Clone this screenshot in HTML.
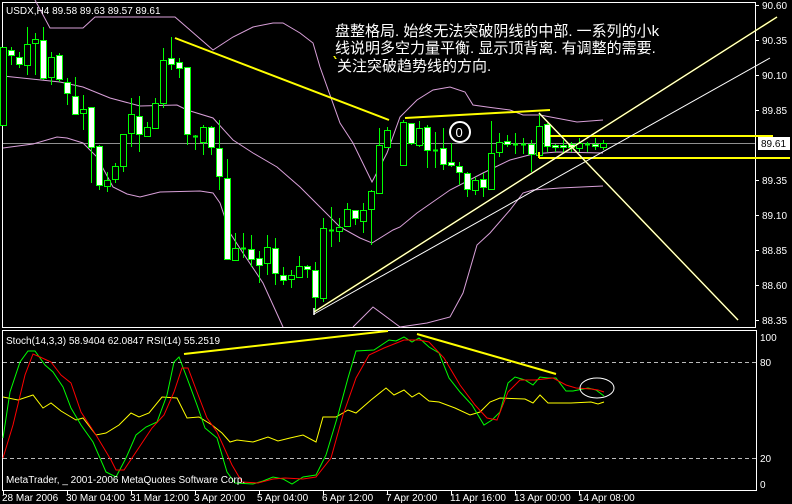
<!DOCTYPE html>
<html><head><meta charset="utf-8"><style>
html,body{margin:0;padding:0;background:#000;width:792px;height:504px;overflow:hidden}
svg{display:block}
text{font-family:"Liberation Sans",sans-serif;fill:#fff}
.cn{font-family:"Liberation Sans","WenQuanYi Zen Hei","Noto Sans CJK SC",sans-serif;font-size:15px}
.ax{font-size:10px}
</style></head><body>
<svg id="s" width="792" height="504" viewBox="0 0 792 504" xmlns="http://www.w3.org/2000/svg" shape-rendering="crispEdges">
<rect width="792" height="504" fill="#000"/>
<!-- main window border -->
<rect x="2.5" y="2.5" width="753" height="325" fill="none" stroke="#fff"/>
<rect x="2.5" y="330.5" width="754" height="160" fill="none" stroke="#fff"/>
<!-- gray price line -->
<line x1="3" y1="143.5" x2="755" y2="143.5" stroke="#909090"/>
<g id="bands" fill="none" stroke="#d9a0d9" stroke-width="1" shape-rendering="auto">
<polyline points="35,0 50,28 83,28 95,17 175,17 213,50 233,37 253,27 273,23 283,23 300,33 313,43 320,67 340,123 353,143 372,182 387,153 400,117 417,100 433,90 450,87 465,92 473,105 487,107 510,110 523,115 540,115 577,122 603,120"/>
<polyline points="3,76 60,82 83,87 110,98 140,106 177,105 187,110 213,118 233,140 253,153 277,167 300,187 320,207 340,227 360,238 372,243 393,230 400,227 417,213 450,190 483,173 510,160 533,154 557,152 603,153"/>
<polyline points="3,148 33,144 57,137 67,138 83,143 97,157 113,187 127,194 140,197 160,192 200,191 213,193 220,203 230,233 243,253 263,283 283,327"/>
<polyline points="353,327 373,307 400,327"/>
<polyline points="400,327 427,323 450,317 463,293 477,245 490,233 510,210 523,193 533,190 560,188 603,186"/>
</g>
<g id="candles"></g>
<!-- trend lines -->
<g shape-rendering="auto" fill="none">
<line x1="175" y1="38" x2="389" y2="120" stroke="#ffff00" stroke-width="2"/>
<line x1="405" y1="118" x2="550" y2="110" stroke="#ffff00" stroke-width="2"/>
<line x1="550" y1="136" x2="773" y2="136" stroke="#ffff00" stroke-width="2"/>
<line x1="539" y1="158" x2="790" y2="158" stroke="#ffff00" stroke-width="2"/>
<line x1="539" y1="152" x2="539" y2="158" stroke="#ffff00" stroke-width="2"/>
<line x1="314" y1="312" x2="777" y2="17" stroke="#ffff00" stroke-width="1.5"/>
<line x1="314" y1="312" x2="777" y2="17" stroke="#fff" stroke-width="1"/>
<line x1="314" y1="314" x2="770" y2="58" stroke="#fff" stroke-width="1"/>
<line x1="314" y1="308" x2="314" y2="315" stroke="#fff" stroke-width="1.5"/>
<line x1="539" y1="113" x2="738" y2="320" stroke="#ffff00" stroke-width="1.5"/>
<line x1="539" y1="113" x2="738" y2="320" stroke="#fff" stroke-width="1"/>
<circle cx="460" cy="132" r="10" stroke="#fff" stroke-width="2"/>
</g>
<text x="455.5" y="137" style="font-size:13px">0</text>
<!-- title -->
<text x="6" y="14" class="ax">USDX,H4  89.58 89.63 89.57 89.61</text>
<text class="cn" x="335" y="36">盘整格局. 始终无法突破阴线的中部. 一系列的小k</text>
<text class="cn" x="335" y="53">线说明多空力量平衡. 显示顶背离. 有调整的需要.</text>
<text class="cn" x="337" y="71">关注突破趋势线的方向.</text>
<line x1="334" y1="56" x2="336" y2="59" stroke="#ff0" stroke-width="1.5"/>
<!-- price axis -->
<g class="ax">
<text x="762" y="9">90.60</text><text x="762" y="44">90.35</text><text x="762" y="79">90.10</text>
<text x="762" y="114">89.85</text><text x="762" y="184">89.35</text><text x="762" y="219">89.10</text>
<text x="762" y="254">88.85</text><text x="762" y="289">88.60</text><text x="762" y="324">88.35</text>
</g>
<g stroke="#fff">
<line x1="755" y1="5.5" x2="759" y2="5.5"/><line x1="755" y1="40.5" x2="759" y2="40.5"/><line x1="755" y1="75.5" x2="759" y2="75.5"/>
<line x1="755" y1="110.5" x2="759" y2="110.5"/><line x1="755" y1="180.5" x2="759" y2="180.5"/><line x1="755" y1="215.5" x2="759" y2="215.5"/>
<line x1="755" y1="250.5" x2="759" y2="250.5"/><line x1="755" y1="285.5" x2="759" y2="285.5"/><line x1="755" y1="320.5" x2="759" y2="320.5"/>
</g>
<rect x="758" y="137" width="32" height="13" fill="#fff"/>
<text x="761" y="147" class="ax" style="fill:#000">89.61</text>
<!-- sub window -->
<line x1="3" y1="362.5" x2="756" y2="362.5" stroke="#bbb" stroke-dasharray="4,3"/>
<line x1="3" y1="458.5" x2="756" y2="458.5" stroke="#bbb" stroke-dasharray="4,3"/>
<g class="ax"><text x="760" y="341">100</text><text x="760" y="366">80</text><text x="760" y="462">20</text><text x="760" y="488">0</text></g>
<text x="6" y="344" class="ax">Stoch(14,3,3) 58.9404 62.0847  RSI(14) 55.2519</text>
<g fill="none" shape-rendering="auto" stroke-width="1">
<polyline stroke="#ffff00" points="3,397 18,400 33,395 43,408 51,403 61,411 76,420 83,418 96,435 106,433 119,425 131,413 139,417 149,413 162,397 177,398 187,418 199,417 212,425 222,433 230,442 237,440 253,442 268,437 278,441 290,438 303,435 316,442 323,417 336,417 348,410 356,413 371,400 386,388 394,395 404,390 412,397 419,393 429,401 439,402 455,408 470,415 480,412 490,402 500,398 525,399 533,403 540,395 548,403 571,403 591,402 598,404 604,402"/>
<polyline stroke="#00ff00" points="3,438 10,392 20,362 28,351 35,351 45,365 53,372 63,387 71,408 81,425 93,442 106,472 116,477 126,458 136,435 146,427 157,422 167,395 174,362 179,357 187,378 197,405 205,428 217,438 227,472 235,483 253,484 263,481 273,477 283,479 292,484 303,477 316,475 326,455 338,415 348,378 356,351 374,350 389,340 396,341 404,337 412,342 419,338 429,347 439,353 449,378 460,392 472,405 484,425 492,420 500,412 508,383 515,377 525,380 533,385 540,377 548,378 556,378 566,391 573,391 588,388 596,390 604,396"/>
<polyline stroke="#ff0000" points="3,458 13,425 25,375 33,354 40,357 51,362 61,375 71,383 81,412 96,435 111,460 116,470 124,470 136,452 152,428 164,415 174,392 182,368 188,368 197,392 207,418 217,432 232,465 242,482 258,483 273,479 285,478 303,479 316,477 331,458 343,415 356,378 369,355 384,348 404,340 419,340 429,342 444,358 460,385 475,405 487,418 497,420 508,392 520,380 535,380 553,378 566,385 576,388 591,389 598,390 604,392"/>
<line x1="184" y1="354" x2="388" y2="331" stroke="#ffff00" stroke-width="2"/>
<line x1="417" y1="334" x2="556" y2="374" stroke="#ffff00" stroke-width="2"/>
<ellipse cx="597" cy="388" rx="17" ry="10" stroke="#fff"/>
</g>
<text x="6" y="483" class="ax">MetaTrader, _ 2001-2006 MetaQuotes Software Corp.</text>
<!-- time axis -->
<g class="ax">
<text x="2" y="501">28 Mar 2006</text><text x="66" y="501">30 Mar 04:00</text><text x="130" y="501">31 Mar 12:00</text>
<text x="194" y="501">3 Apr 20:00</text><text x="257" y="501">5 Apr 04:00</text><text x="322" y="501">6 Apr 12:00</text>
<text x="386" y="501">7 Apr 20:00</text><text x="450" y="501">11 Apr 16:00</text><text x="514" y="501">13 Apr 00:00</text>
<text x="578" y="501">14 Apr 08:00</text>
</g>
<g stroke="#fff">
<line x1="3.5" y1="491" x2="3.5" y2="495"/><line x1="67.5" y1="491" x2="67.5" y2="495"/><line x1="131.5" y1="491" x2="131.5" y2="495"/>
<line x1="195.5" y1="491" x2="195.5" y2="495"/><line x1="259.5" y1="491" x2="259.5" y2="495"/><line x1="323.5" y1="491" x2="323.5" y2="495"/>
<line x1="387.5" y1="491" x2="387.5" y2="495"/><line x1="451.5" y1="491" x2="451.5" y2="495"/><line x1="515.5" y1="491" x2="515.5" y2="495"/>
<line x1="579.5" y1="491" x2="579.5" y2="495"/>
</g>
</svg>
<script>
var d=[[3,47,125,47,125,0],[11,47,65,50,55,1],[19,52,68,57,64,1],[27,27,75,44,65,0],[35,33,75,39,43,0],[43,27,80,40,78,1],[51,52,85,57,77,0],[59,53,82,55,79,1],[67,78,105,82,93,1],[75,77,114,96,114,1],[83,95,130,109,113,0],[91,107,183,107,147,1],[99,145,190,146,185,1],[107,172,192,180,186,0],[115,163,183,166,179,0],[123,134,172,134,166,0],[131,98,147,114,133,0],[139,96,152,116,134,1],[147,122,137,127,136,0],[155,98,128,103,128,0],[163,48,108,60,103,0],[171,37,70,58,64,1],[179,58,78,62,68,1],[187,67,145,67,134,1],[195,135,150,136,136,0],[203,125,155,127,142,0],[211,126,155,127,147,1],[219,120,190,148,176,1],[227,159,260,178,259,1],[235,233,260,248,260,0],[243,233,258,248,248,0],[251,235,267,249,259,1],[259,251,283,258,265,1],[267,235,275,247,263,0],[275,238,285,248,273,1],[283,267,285,275,280,1],[291,270,288,275,279,0],[299,256,277,266,277,0],[307,265,278,266,269,1],[315,262,312,270,297,1],[323,218,302,228,298,0],[331,207,247,230,230,0],[339,218,242,227,231,0],[347,203,227,209,226,0],[355,210,225,210,218,1],[363,203,233,210,221,0],[371,190,245,191,209,0],[379,128,193,145,193,0],[387,127,147,130,147,0],[403,120,165,122,165,0],[411,123,145,123,143,1],[419,121,147,128,145,0],[427,125,168,127,150,1],[435,132,168,150,150,0],[443,128,170,148,164,1],[451,143,167,162,165,1],[459,162,185,166,172,1],[467,172,197,173,189,1],[475,177,195,180,190,0],[483,173,197,179,187,1],[491,121,189,153,189,0],[499,133,157,142,152,0],[507,135,147,141,144,1],[515,133,154,144,144,0],[523,138,154,144,144,0],[531,140,172,144,154,1],[539,114,156,126,155,0],[547,123,152,124,146,1],[555,144,152,145,147,1],[563,140,153,145,147,1],[571,142,152,144,147,1],[579,138,152,143,148,0],[587,142,152,144,144,0],[595,138,150,144,146,1],[603,140,150,143,147,0]];
var g=document.getElementById('candles'),h='';
d.forEach(function(c){var x=c[0];h+='<line x1="'+(x+.5)+'" y1="'+c[1]+'" x2="'+(x+.5)+'" y2="'+c[2]+'" stroke="#00ff00"/>';
var bh=Math.max(1,c[4]-c[3]);
if(bh<=1){h+='<line x1="'+(x-2)+'" y1="'+(c[3]+.5)+'" x2="'+(x+3)+'" y2="'+(c[3]+.5)+'" stroke="#00ff00" stroke-width="2"/>';}
else h+='<rect x="'+(x-2.5)+'" y="'+(c[3]+.5)+'" width="6" height="'+bh+'" fill="'+(c[5]?'#fff':'#000')+'" stroke="#00ff00"/>';});
g.innerHTML=h;
</script>
</body></html>
